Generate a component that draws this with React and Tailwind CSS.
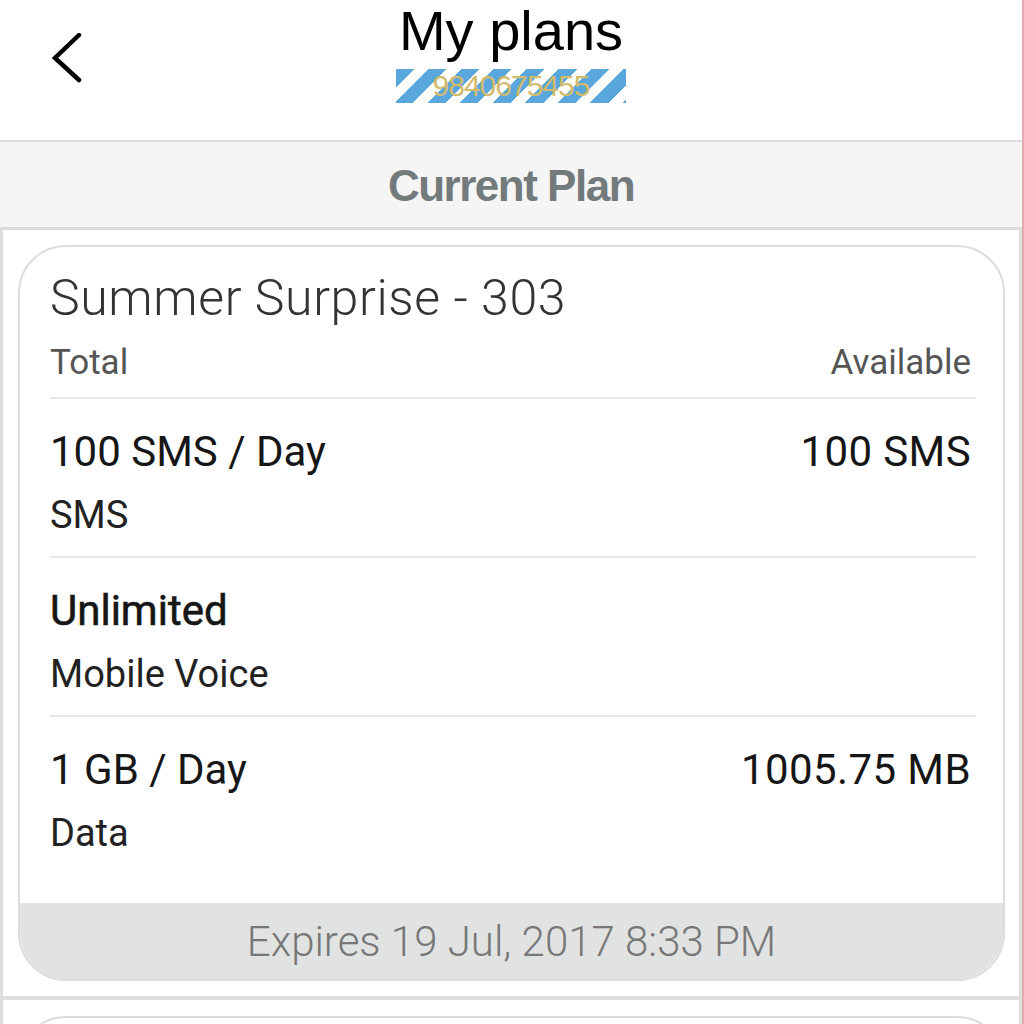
import React from "react";

function Row({ value, label, right, medium, last }) {
  return (
    <div className={`flex items-start justify-between pt-[28px] pb-[18px] ${last ? "" : "border-b-2 border-[#e6e6e6]"}`}>
      <div className="flex flex-col">
        <div className={`text-[42px] leading-[50px] text-[#161616] ${medium ? "[-webkit-text-stroke:0.6px_#161616]" : ""}`}>{value}</div>
        <div className="mt-[15px] text-[38px] leading-[46px] text-[#222]">{label}</div>
      </div>
      {right && <div className="text-[42px] leading-[50px] tracking-[0.4px] text-[#161616] pr-[5px]">{right}</div>}
    </div>
  );
}

export default function App() {
  return (
    <div className="w-full h-[1024px] overflow-hidden bg-white border-r-2 border-[#e6aab4]" style={{ fontFamily: "Roboto, 'Liberation Sans', sans-serif" }}>
      {/* Header */}
      <div className="grid grid-cols-[1fr_auto_1fr] h-[140px] bg-white">
        <div className="pl-[50px] pt-[33px]">
          <svg width="34" height="50" viewBox="0 0 34 50" fill="none">
            <polyline points="29,2 5,25 29,47" stroke="#000" strokeWidth="4.5" strokeLinecap="round" strokeLinejoin="miter" />
          </svg>
        </div>
        <div className="flex flex-col items-center pt-[3px]">
          <div className="text-[56px] leading-[56px] text-black" style={{ fontFamily: "'Liberation Sans', Arial, sans-serif" }}>My plans</div>
          <div className="mt-[10px] h-[34px] w-[230px] flex items-center justify-center bg-[repeating-linear-gradient(135deg,#5aa7de_0px,#5aa7de_13px,#ffffff_13px,#ffffff_23px)]">
            <span className="text-[30px] leading-[34px] tracking-[-1px] text-[#d2bb6a]" style={{ fontFamily: "'Liberation Sans', Arial, sans-serif" }}>9840675455</span>
          </div>
        </div>
        <div />
      </div>

      {/* Current Plan band */}
      <div className="h-[90px] bg-[#f5f5f5] border-t-2 border-b-[3px] border-[#dcdcdc] flex items-center justify-center">
        <span className="text-[44px] font-bold tracking-[-1.5px] text-[#737a7c] pt-[2px]" style={{ fontFamily: "'Liberation Sans', Arial, sans-serif" }}>Current Plan</span>
      </div>

      {/* Plan section */}
      <div className="bg-white border-x-[3px] border-b-4 border-[#dedede] pl-[15px] pr-[14px] pt-[15px] pb-[15px]">
        <div className="rounded-[48px] border-2 border-[#dcdcdc] overflow-hidden bg-white">
          <div className="pl-[30px] pr-[27px]">
            <div className="border-b-2 border-[#e6e6e6] pt-[23px] pb-[13px]">
              <div className="text-[50px] leading-[56px] font-light tracking-[0.6px] text-[#333]">Summer Surprise - 303</div>
              <div className="mt-[16px] flex justify-between text-[35px] leading-[42px] text-[#555]">
                <span>Total</span>
                <span className="pr-[5px]">Available</span>
              </div>
            </div>
            <Row value="100 SMS / Day" label="SMS" right="100 SMS" />
            <Row value="Unlimited" label="Mobile Voice" medium />
            <Row value="1 GB / Day" label="Data" right="1005.75 MB" last />
            <div className="h-[29px]" />
          </div>
          <div className="h-[76px] bg-[#e1e3e3] flex items-center justify-center">
            <span className="text-[42px] font-light text-[#777]">Expires 19 Jul, 2017 8:33 PM</span>
          </div>
        </div>
      </div>

      {/* Next section */}
      <div className="bg-white border-x-[3px] border-[#dedede] pl-[15px] pr-[14px] pt-[16px]">
        <div className="rounded-[48px] border-2 border-[#dcdcdc] h-[200px] bg-white" />
      </div>
    </div>
  );
}
